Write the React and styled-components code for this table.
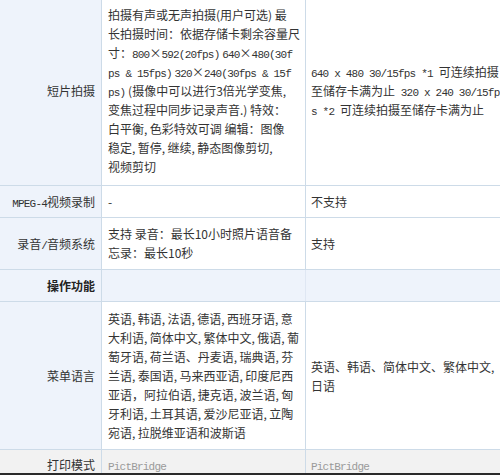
import React from 'react';
import styled, { createGlobalStyle } from 'styled-components';

const GlobalStyle = createGlobalStyle`
  body {
    margin: 0;
    background: #fff;
    font-family: "Noto Sans CJK SC", "Noto Sans", sans-serif;
    font-size: 12px;
    color: #333;
  }
`;

const Sheet = styled.div`
  width: 500px;
  border-bottom: 2px solid #2b2b2b;
`;

const Row = styled.div`
  display: grid;
  grid-template-columns: 102px 204px 1fr;
  border-bottom: ${({ $last }) => ($last ? 'none' : '1px solid #cddbe8')};
  background: ${({ $tone }) =>
    $tone === 'section' ? '#eef3fb' : $tone === 'gray' ? '#f2f2f2' : '#fff'};
`;

const Label = styled.div`
  display: flex;
  flex-direction: column;
  justify-content: center;
  align-items: flex-end;
  text-align: right;
  padding: ${({ $pad }) => $pad || '6px 6px 6px 0'};
  background: ${({ $tone }) => ($tone === 'gray' ? '#f2f2f2' : '#eef3fb')};
  border-right: 1px solid #cddbe8;
  font-weight: ${({ $bold }) => ($bold ? 700 : 400)};
  color: ${({ $bold }) => ($bold ? '#222' : '#333')};
  overflow: hidden;
`;

const Cell = styled.div`
  display: flex;
  flex-direction: column;
  justify-content: center;
  padding: ${({ $pad }) => $pad || '6px 0'};
  padding-left: ${({ $left }) => $left}px;
  border-right: ${({ $divider }) => ($divider ? `1px solid ${$divider}` : 'none')};
  color: ${({ $muted }) => ($muted ? '#9a9a9a' : '#333')};
  overflow: hidden;
`;

const Line = styled.div`
  white-space: nowrap;
  height: ${({ $h }) => $h || 19}px;
  line-height: ${({ $h }) => $h || 19}px;
`;

const Mono = styled.span`
  font-family: "Liberation Mono", "DejaVu Sans Mono", monospace;
  font-size: 11px;
  letter-spacing: -0.8px;
  line-height: 1;
`;

const c = ',\u2009';

const shotLines = [
  <>拍摄有声或无声拍摄(用户可选) 最</>,
  <>长拍摄时间：依据存储卡剩余容量尺</>,
  <>寸：<Mono>800</Mono>×<Mono>592(20fps)</Mono> <Mono>640</Mono>×<Mono>480(30f</Mono></>,
  <><Mono>ps &amp; 15fps)</Mono> <Mono>320</Mono>×<Mono>240(30fps &amp; 15f</Mono></>,
  <><Mono>ps)</Mono> (摄像中可以进行3倍光学变焦,</>,
  <>变焦过程中同步记录声音.) 特效：</>,
  <>白平衡{c}色彩特效可调 编辑：图像</>,
  <>稳定{c}暂停{c}继续{c}静态图像剪切,</>,
  <>视频剪切</>,
];

const shotSpec = [
  <><Mono>640 x 480 30/15fps *1 </Mono>可连续拍摄</>,
  <>至储存卡满为止<Mono> 320 x 240 30/15fp</Mono></>,
  <><Mono>s *2 </Mono>可连续拍摄至储存卡满为止</>,
];

const langLines = [
  `英语${c}韩语${c}法语${c}德语${c}西班牙语${c}意`,
  `大利语${c}简体中文${c}繁体中文${c}俄语${c}葡`,
  `萄牙语${c}荷兰语、丹麦语${c}瑞典语${c}芬`,
  `兰语${c}泰国语${c}马来西亚语${c}印度尼西`,
  `亚语，阿拉伯语${c}捷克语${c}波兰语${c}匈`,
  `牙利语${c}土耳其语${c}爱沙尼亚语${c}立陶`,
  `宛语${c}拉脱维亚语和波斯语`,
];

const Lines = ({ items }) => items.map((l, i) => <Line key={i}>{l}</Line>);

export default function App() {
  return (
    <>
      <GlobalStyle />
      <Sheet>
        <Row>
          <Label $pad="5px 6px 9px 0"><Line>短片拍摄</Line></Label>
          <Cell $left={6} $pad="5px 0 9px" $divider="#cddbe8">
            <Lines items={shotLines} />
          </Cell>
          <Cell $left={5} $pad="5px 0 9px">
            <Lines items={shotSpec} />
          </Cell>
        </Row>

        <Row>
          <Label><Line><Mono>MPEG-4</Mono>视频录制</Line></Label>
          <Cell $left={6} $divider="#cddbe8"><Line>-</Line></Cell>
          <Cell $left={5}><Line>不支持</Line></Cell>
        </Row>

        <Row>
          <Label $pad="6px 6px 7px 0"><Line>录音<Mono>/</Mono>音频系统</Line></Label>
          <Cell $left={6} $pad="6px 0 7px" $divider="#cddbe8">
            <Line>支持 录音：最长10小时照片语音备</Line>
            <Line>忘录：最长10秒</Line>
          </Cell>
          <Cell $left={5} $pad="6px 0 7px"><Line>支持</Line></Cell>
        </Row>

        <Row $tone="section">
          <Label $bold><Line>操作功能</Line></Label>
          <Cell $left={6} $divider="#dfe7f3" />
          <Cell $left={5} />
        </Row>

        <Row>
          <Label $pad="7px 6px 7px 0"><Line>菜单语言</Line></Label>
          <Cell $left={6} $pad="7px 0" $divider="#cddbe8">
            <Lines items={langLines} />
          </Cell>
          <Cell $left={5} $pad="7px 0">
            <Line>英语、韩语、简体中文、繁体中文,</Line>
            <Line>日语</Line>
          </Cell>
        </Row>

        <Row $tone="gray" $last>
          <Label $tone="gray" $pad="6px 6px 0 0"><Line $h={17}>打印模式</Line></Label>
          <Cell $left={6} $pad="6px 0 0" $divider="#cddbe8" $muted>
            <Line $h={17}><Mono>PictBridge</Mono></Line>
          </Cell>
          <Cell $left={5} $pad="6px 0 0" $muted>
            <Line $h={17}><Mono>PictBridge</Mono></Line>
          </Cell>
        </Row>
      </Sheet>
    </>
  );
}
